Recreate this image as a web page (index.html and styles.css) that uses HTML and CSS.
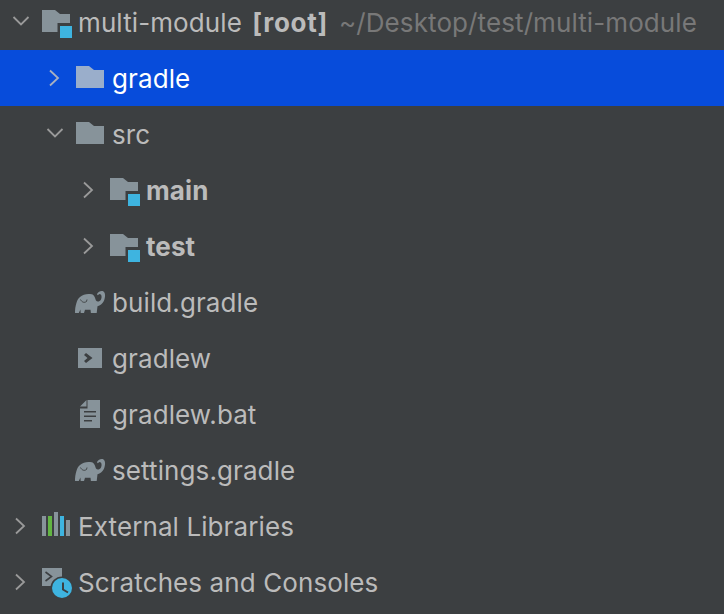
FILE: index.html
```html
<!DOCTYPE html>
<html lang="en">
<head>
    <meta charset="UTF-8">
    <meta name="viewport" content="width=device-width, initial-scale=1.0">
    <title>Project</title>
    <link rel="stylesheet" href="styles.css">
</head>
<body>
    <svg class="defs" width="0" height="0" aria-hidden="true">
        <symbol id="chevron-right" viewBox="0 0 20 20">
            <path d="M5 2.5 L13 10 L5 17.5" fill="none" stroke="currentColor" stroke-width="1.8"/>
        </symbol>
        <symbol id="chevron-down" viewBox="0 0 20 20">
            <path d="M2.5 5 L10 12.5 L17.5 5" fill="none" stroke="currentColor" stroke-width="1.8"/>
        </symbol>
        <symbol id="folder" viewBox="0 0 32 32">
            <path d="M0 4 H13 L18 8 H28 V26 H0 Z" fill="currentColor"/>
        </symbol>
        <symbol id="module" viewBox="0 0 32 32">
            <path d="M0 4 H13 L18 8 H28 V17 H15.5 V26 H0 Z" fill="currentColor"/>
            <rect x="18" y="20" width="12" height="12" fill="#3eb4e0"/>
        </symbol>
        <symbol id="elephant" viewBox="0 0 32 32">
            <path d="M-1 27 C-1 20 1 13 4 11 C7 8 12 7.5 15.7 8.3 C18.5 9 19 12 20 14.5 C21 16 23.5 16 25 13.5 C26.2 11 25.5 8 23.5 8 L21.6 9.2 L21 8 C22.5 5.5 25.5 4.4 27.5 5.6 C29 6.6 29.2 9 29 10.5 C28.6 14 27.3 18.5 21.5 20.3 L20.7 27 H14.9 L14.5 23.7 H9 L8 27 H4.7 L4.4 23.5 L2.8 27 Z" fill="currentColor"/>
            <path d="M4.5 13.5 C6 16.5 8.5 17 10.5 15.5 L11 13.5" fill="none" stroke="#3c3f41" stroke-width="0.9"/>
        </symbol>
        <symbol id="script" viewBox="0 0 32 32">
            <path d="M2 6 H26 V26 H2 Z M10 11 L8 13 L11.5 16 L8 19 L10 21 L16.5 16 Z" fill="currentColor" fill-rule="evenodd"/>
        </symbol>
        <symbol id="textfile" viewBox="0 0 32 32">
            <path d="M11.5 2 H24 V30 H4 V10.5 H11.5 Z M4 8.5 L10.5 2 V8.5 Z M8 13 V14.6 H20 V13 Z M8 17.5 V19.1 H20 V17.5 Z M8 22 V23.6 H16 V22 Z" fill="currentColor" fill-rule="evenodd"/>
        </symbol>
        <symbol id="library" viewBox="0 0 32 32">
            <rect x="0" y="6" width="4" height="20" fill="#87939a"/>
            <rect x="6" y="6" width="4" height="20" fill="#62b543"/>
            <rect x="12" y="2" width="4" height="24" fill="#87939a"/>
            <rect x="18" y="6" width="4" height="20" fill="#3eb4e0"/>
            <rect x="24" y="10" width="4" height="16" fill="#87939a"/>
        </symbol>
        <symbol id="scratch" viewBox="0 0 32 32">
            <rect x="0" y="2" width="20" height="18" fill="#87939a"/>
            <path d="M3.5 6 L9.5 10.5 L3.5 15" fill="none" stroke="#3c3f41" stroke-width="1.6"/>
            <circle cx="20" cy="22" r="11.5" fill="#3c3f41"/>
            <circle cx="20" cy="22" r="10" fill="#3eb4e0"/>
            <path d="M21 16.5 V23.5 L26 26.5" fill="none" stroke="#3c3f41" stroke-width="2"/>
        </symbol>
    </svg>

    <div class="tree">
        <div class="row level-0">
            <svg class="arrow"><use href="#chevron-down"/></svg>
            <svg class="icon"><use href="#module"/></svg>
            <span class="name">multi-module <b class="root">[root]</b></span>
            <span class="path">~/Desktop/test/multi-module</span>
        </div>
        <div class="row level-1 selected">
            <svg class="arrow"><use href="#chevron-right"/></svg>
            <svg class="icon"><use href="#folder"/></svg>
            <span class="name">gradle</span>
        </div>
        <div class="row level-1">
            <svg class="arrow"><use href="#chevron-down"/></svg>
            <svg class="icon"><use href="#folder"/></svg>
            <span class="name">src</span>
        </div>
        <div class="row level-2">
            <svg class="arrow"><use href="#chevron-right"/></svg>
            <svg class="icon"><use href="#module"/></svg>
            <span class="name"><b>main</b></span>
        </div>
        <div class="row level-2">
            <svg class="arrow"><use href="#chevron-right"/></svg>
            <svg class="icon"><use href="#module"/></svg>
            <span class="name"><b>test</b></span>
        </div>
        <div class="row level-1">
            <span class="arrow"></span>
            <svg class="icon"><use href="#elephant"/></svg>
            <span class="name">build.gradle</span>
        </div>
        <div class="row level-1">
            <span class="arrow"></span>
            <svg class="icon"><use href="#script"/></svg>
            <span class="name">gradlew</span>
        </div>
        <div class="row level-1">
            <span class="arrow"></span>
            <svg class="icon"><use href="#textfile"/></svg>
            <span class="name">gradlew.bat</span>
        </div>
        <div class="row level-1">
            <span class="arrow"></span>
            <svg class="icon"><use href="#elephant"/></svg>
            <span class="name">settings.gradle</span>
        </div>
        <div class="row level-0">
            <svg class="arrow"><use href="#chevron-right"/></svg>
            <svg class="icon"><use href="#library"/></svg>
            <span class="name">External Libraries</span>
        </div>
        <div class="row level-0">
            <svg class="arrow"><use href="#chevron-right"/></svg>
            <svg class="icon"><use href="#scratch"/></svg>
            <span class="name">Scratches and Consoles</span>
        </div>
    </div>
</body>
</html>
```
FILE: styles.css
```css
html, body {
    height: 100%;
}
body {
    margin: 0;
    overflow: hidden;
    background-color: #3c3f41;
    color: #bbbbbb;
    font-family: Inter, "Liberation Sans", sans-serif;
    font-size: 26px;
    letter-spacing: 0.1px;
}
.defs {
    display: block;
    height: 0;
}
.tree {
    margin-top: -6px;
}
.row {
    display: flex;
    align-items: center;
    height: 56px;
    white-space: nowrap;
}
.level-0 {
    padding-left: 11px;
}
.level-1 {
    padding-left: 45px;
}
.level-2 {
    padding-left: 79px;
}
.arrow {
    flex: none;
    width: 20px;
    height: 20px;
    margin-right: 11px;
    color: #9a9a9a;
}
.icon {
    flex: none;
    width: 32px;
    height: 32px;
    margin-right: 4px;
    color: #87939a;
    overflow: visible;
}
symbol {
    overflow: visible;
}
.name b {
    font-weight: 700;
}
.name .root {
    margin-left: 3px;
    letter-spacing: 0.7px;
}
.path {
    margin-left: 11px;
    color: #787878;
}
.selected {
    background-color: #074cdb;
    color: #ffffff;
}
.selected .icon {
    color: #9aaecb;
}
.selected .arrow {
    color: #a8b0c0;
}
```
